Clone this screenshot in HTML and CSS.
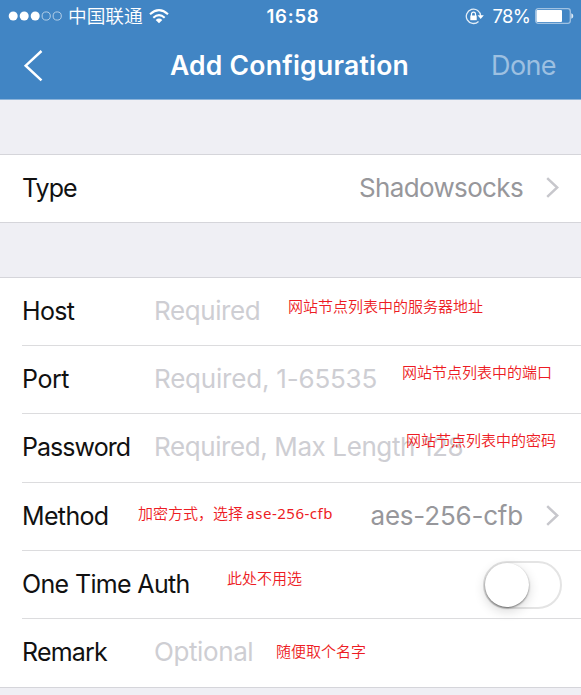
FILE: index.html
```html
<!DOCTYPE html>
<html lang="en">
<head>
<meta charset="utf-8">
<title>Add Configuration</title>
<link rel="stylesheet" href="styles.css">
</head>
<body>
<header class="header">
  <div class="status">
    <div class="status-left">
      <svg class="signal" width="54" height="10" viewBox="0 0 54 10">
        <g fill="#fff"><circle cx="5.200" cy="5" r="4.500"/><circle cx="16.200" cy="5" r="4.500"/><circle cx="27.200" cy="5" r="4.500"/></g>
        <g fill="none" stroke="#b4cfe8" stroke-width="1"><circle cx="38.200" cy="5" r="4.100"/><circle cx="49.200" cy="5" r="4.100"/></g>
      </svg>
      <span class="carrier" lang="zh-CN">中国联通</span>
      <svg class="wifi" width="20" height="15" viewBox="0 0 20 15">
        <g fill="none" stroke="#fff" stroke-width="2.100"><path d="M1 5.200Q10-2.800 19 5.200"/><path d="M4.300 8.700Q10 3.600 15.700 8.700"/></g>
        <path fill="#fff" d="M6.700 11Q10 8.100 13.300 11L10 14.300Z"/>
      </svg>
    </div>
    <time class="clock">16:58</time>
    <div class="status-right">
      <svg class="lock" width="19" height="17" viewBox="0 0 19 17">
        <path d="M15.700 8A7.200 7.200 0 1 0 13.500 13.500" fill="none" stroke="#e4eef7" stroke-width="1.300"/>
        <path d="M12.600 7.200H18.800L15.700 11Z" fill="#fff"/>
        <path d="M5.300 7.500H11.700V12.200H5.300Z" fill="#fff"/>
        <path d="M6.500 8V6.200A2 2 0 0 1 10.500 6.200V8" fill="none" stroke="#fff" stroke-width="1.200"/>
      </svg>
      <span class="percent">78%</span>
      <svg class="battery" width="39" height="16" viewBox="0 0 39 16">
        <rect x=".7" y=".7" width="34.600" height="14.600" rx="2.500" fill="none" stroke="#a0c2e2" stroke-width="1.300"/>
        <rect x="1.500" y="2" width="25.500" height="12" rx="1" fill="#fff"/>
        <path d="M36.300 5.300Q38.300 6 38.300 8T36.300 10.700Z" fill="#dce9f5"/>
      </svg>
    </div>
  </div>
  <nav class="nav">
    <svg class="back" width="20" height="32" viewBox="0 0 20 32"><path d="M18.500 1L2.700 15.700L18.500 30.400" fill="none" stroke="#fff" stroke-width="2.500"/></svg>
    <h1 class="title">Add Configuration</h1>
    <span class="done">Done</span>
  </nav>
</header>

<main>
  <section class="group">
    <div class="row">
      <span class="label l-type">Type</span>
      <span class="value v-type">Shadowsocks</span>
      <svg class="chevron" width="13" height="21" viewBox="0 0 13 21"><path d="M1.200 1.200L11.200 10.500L1.200 19.800" fill="none" stroke="#c7c7cc" stroke-width="2.500"/></svg>
    </div>
  </section>

  <section class="group">
    <div class="row">
      <span class="label l-host">Host</span><span class="hint h-host">Required</span>
      <span class="note n-host" lang="zh-CN">网站节点列表中的服务器地址</span>
    </div>
    <div class="row">
      <span class="label l-port">Port</span><span class="hint h-port">Required, 1-65535</span>
      <span class="note n-port" lang="zh-CN">网站节点列表中的端口</span>
    </div>
    <div class="row">
      <span class="label l-pass">Password</span><span class="hint h-pass">Required, Max Length 128</span>
      <span class="note n-pass" lang="zh-CN">网站节点列表中的密码</span>
    </div>
    <div class="row">
      <span class="label l-method">Method</span>
      <span class="value v-method">aes-256-cfb</span>
      <svg class="chevron" width="13" height="21" viewBox="0 0 13 21"><path d="M1.200 1.200L11.200 10.500L1.200 19.800" fill="none" stroke="#c7c7cc" stroke-width="2.500"/></svg>
      <span class="note n-method" lang="zh-CN">加密方式，选择 <span class="latin">ase-256-cfb</span></span>
    </div>
    <div class="row">
      <span class="label l-auth">One Time Auth</span>
      <span class="switch"><span class="knob"></span></span>
      <span class="note n-auth" lang="zh-CN">此处不用选</span>
    </div>
    <div class="row">
      <span class="label l-remark">Remark</span><span class="hint h-remark">Optional</span>
      <span class="note n-remark" lang="zh-CN">随便取个名字</span>
    </div>
  </section>
</main>
</body>
</html>
```

FILE: styles.css
```css
* { box-sizing: border-box; }
body {
  margin: 0;
  height: 695px;
  overflow: hidden;
  background: #efeff4;
  font-family: Inter, "Noto Sans CJK SC", sans-serif;
  color: #111;
}
svg { display: block; flex: none; }
.header {
  height: 100px;
  background: #4185c4;
  border-bottom: 1px solid #8db4da;
  color: #fff;
}
.status {
  display: grid;
  grid-template-columns: 1fr auto 1fr;
  align-items: center;
  height: 32px;
  padding: 0 7px 0 8px;
}
.status-left, .status-right { display: flex; align-items: center; }
.carrier {
  margin-left: 6px;
  padding-bottom: 2px;
  font: 350 18.700px/28px "Noto Sans CJK SC", sans-serif;
}
.wifi { margin-left: 6px; }
.clock { margin-left: 4px; font-size: 18.500px; font-weight: 600; letter-spacing: .8px; }
.status-right { justify-content: flex-end; }
.percent { margin: 0 5px 0 9px; font-size: 18.500px; letter-spacing: -.8px; }
.nav {
  display: grid;
  grid-template-columns: 1fr auto 1fr;
  align-items: center;
  height: 67px;
  padding: 0 25px 0 23px;
}
.title { margin: 0; font-size: 26.500px; line-height: 67px; font-weight: 600; letter-spacing: .25px; }
.done { justify-self: end; font-size: 27px; font-weight: 400; letter-spacing: -.6px; color: #9dc0e1; }
.group {
  margin-top: 54px;
  background: #fff;
  border: solid #d5d5da;
  border-width: 1px 0;
}
.row {
  position: relative;
  display: flex;
  align-items: center;
  height: 68.200px;
  padding: 0 22px 2px 22px;
}
.group:first-child .row { height: 67px; }
.row + .row::before {
  content: "";
  position: absolute;
  top: -1px;
  left: 22px;
  right: 0;
  border-top: 1px solid #dcdcde;
}
.label, .hint, .value { white-space: nowrap; }
.label { width: 132px; font-size: 25px; letter-spacing: -.65px; }
.l-type { letter-spacing: -1px; }
.l-port { letter-spacing: -.45px; }
.l-pass { letter-spacing: -.95px; }
.l-remark { letter-spacing: -.8px; }
.l-auth { width: auto; }
.hint { padding-bottom: 2px; font-size: 26px; letter-spacing: -.4px; color: #ceced3; }
.h-port { letter-spacing: -.2px; }
.value { margin-left: auto; font-size: 26px; color: #97979b; }
.v-type { letter-spacing: -.65px; }
.v-method { letter-spacing: -.2px; }
.chevron { margin-left: 23px; }
.note {
  position: absolute;
  font: 350 15px/20px "Noto Sans CJK SC", sans-serif;
  color: #ed1c24;
  white-space: nowrap;
}
.latin { font-family: "Noto Sans", sans-serif; font-size: 15px; font-weight: 400; letter-spacing: .5px; }
.n-host { left: 288px; top: 18px; }
.n-port { left: 402px; top: 16px; }
.n-pass { left: 406px; top: 16px; }
.n-method { left: 138px; top: 20px; }
.n-auth { left: 227px; top: 17px; }
.n-remark { left: 276px; top: 22px; }
.switch {
  width: 79px;
  height: 48px;
  margin: 2px -3px 0 auto;
  border: 2px solid #e4e4e4;
  border-radius: 24px;
}
.knob {
  display: block;
  width: 44px;
  height: 44px;
  border-radius: 50%;
  background: #fff;
  box-shadow: 0 1px 2px rgba(0, 0, 0, .5), 0 4px 12px rgba(0, 0, 0, .16);
}
```
